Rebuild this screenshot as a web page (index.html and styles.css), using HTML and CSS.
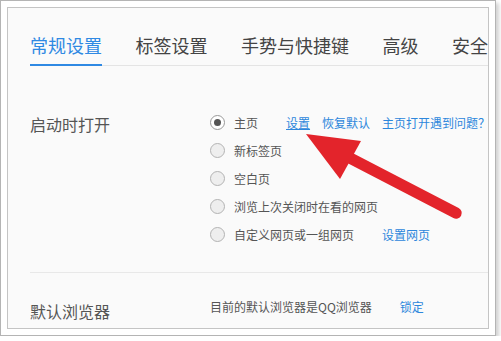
FILE: index.html
```html
<!DOCTYPE html>
<html lang="zh-CN">
<head>
  <meta charset="UTF-8">
  <meta name="viewport" content="width=device-width, initial-scale=1.0">
  <title>常规设置</title>
  <link rel="stylesheet" href="styles.css">
</head>
<body>
  <div class="frame">
    <div class="panel">
      <ul class="tabs">
        <li class="active">常规设置</li>
        <li>标签设置</li>
        <li>手势与快捷键</li>
        <li>高级</li>
        <li>安全</li>
      </ul>

      <div class="section startup">
        <div class="label">启动时打开</div>
        <div class="options">
          <div class="option">
            <span class="radio checked"></span>
            <span class="text">主页</span>
            <a class="link first under">设置</a>
            <a class="link">恢复默认</a>
            <a class="link">主页打开遇到问题？</a>
          </div>
          <div class="option">
            <span class="radio"></span>
            <span class="text">新标签页</span>
          </div>
          <div class="option">
            <span class="radio"></span>
            <span class="text">空白页</span>
          </div>
          <div class="option">
            <span class="radio"></span>
            <span class="text">浏览上次关闭时在看的网页</span>
          </div>
          <div class="option">
            <span class="radio"></span>
            <span class="text">自定义网页或一组网页</span>
            <a class="link first">设置网页</a>
          </div>
        </div>
      </div>

      <div class="divider"></div>

      <div class="section browser">
        <div class="label">默认浏览器</div>
        <div class="options">
          <div class="option">
            <span class="plain">目前的默认浏览器是QQ浏览器</span>
            <a class="link first">锁定</a>
          </div>
        </div>
      </div>
    </div>
  </div>

  <!-- 红色标注箭头 -->
  <svg class="arrow" width="501" height="341" viewBox="0 0 501 341">
    <line x1="348" y1="157" x2="456" y2="213" stroke="#e3242b" stroke-width="11.5" stroke-linecap="round"/>
    <polygon points="306,134 361,141 340,179" fill="#e3242b"/>
  </svg>
</body>
</html>
```

FILE: styles.css
```css
body {
  margin: 0;
  background-color: #fff;
  font-family: "Noto Sans CJK SC", "Microsoft YaHei", sans-serif;
}

.frame {
  width: 482px;
  height: 322px;
  padding: 6px;
  border: 1px solid #b4b4b4;
  background-color: #fff;
  box-shadow: 3px 3px 4px rgba(0,0,0,0.18);
}

.panel {
  height: 320px;
  border: 1px solid #c4c4c4;
  background-color: #fafafa;
  overflow: hidden;
}

.tabs {
  list-style: none;
  margin: 0 0 0 22px;
  padding: 25px 0 0 0;
  display: flex;
  gap: 33.5px;
  border-bottom: 1px solid #e4e4e4;
  white-space: nowrap;
}

.tabs li {
  flex-shrink: 0;
  font-size: 18px;
  line-height: 24px;
  color: #444;
  padding-bottom: 7px;
  border-bottom: 2px solid transparent;
  margin-bottom: -1px;
}

.tabs li.active {
  color: #2f89e3;
  border-bottom-color: #2f89e3;
}

.section {
  display: flex;
  padding-left: 22px;
}

.startup {
  padding-top: 42px;
}

.browser {
  padding-top: 19px;
}

.label {
  width: 180px;
  flex-shrink: 0;
  font-size: 16px;
  line-height: 28px;
  color: #555;
  padding-top: 2px;
}

.browser .label {
  padding-top: 5px;
}

.option {
  display: flex;
  align-items: center;
  height: 28px;
  font-size: 12px;
  color: #555;
  white-space: nowrap;
}

.radio {
  width: 13px;
  height: 13px;
  border: 1px solid #b3b3b3;
  border-radius: 50%;
  background-color: #eee;
  margin-right: 9px;
  position: relative;
}

.radio.checked {
  background-color: #fff;
  border-color: #999;
}

.radio.checked::after {
  content: "";
  position: absolute;
  left: 3px;
  top: 3px;
  width: 7px;
  height: 7px;
  border-radius: 50%;
  background-color: #555;
}

.link {
  color: #2d87dc;
  margin-left: 12px;
  cursor: pointer;
}

.link.first {
  margin-left: 28px;
}

.link.under {
  text-decoration: underline;
}

.divider {
  height: 1px;
  margin: 24px 0 0 22px;
  background-color: #e8e8e8;
}

.arrow {
  position: absolute;
  left: 0;
  top: 0;
  pointer-events: none;
}
```
